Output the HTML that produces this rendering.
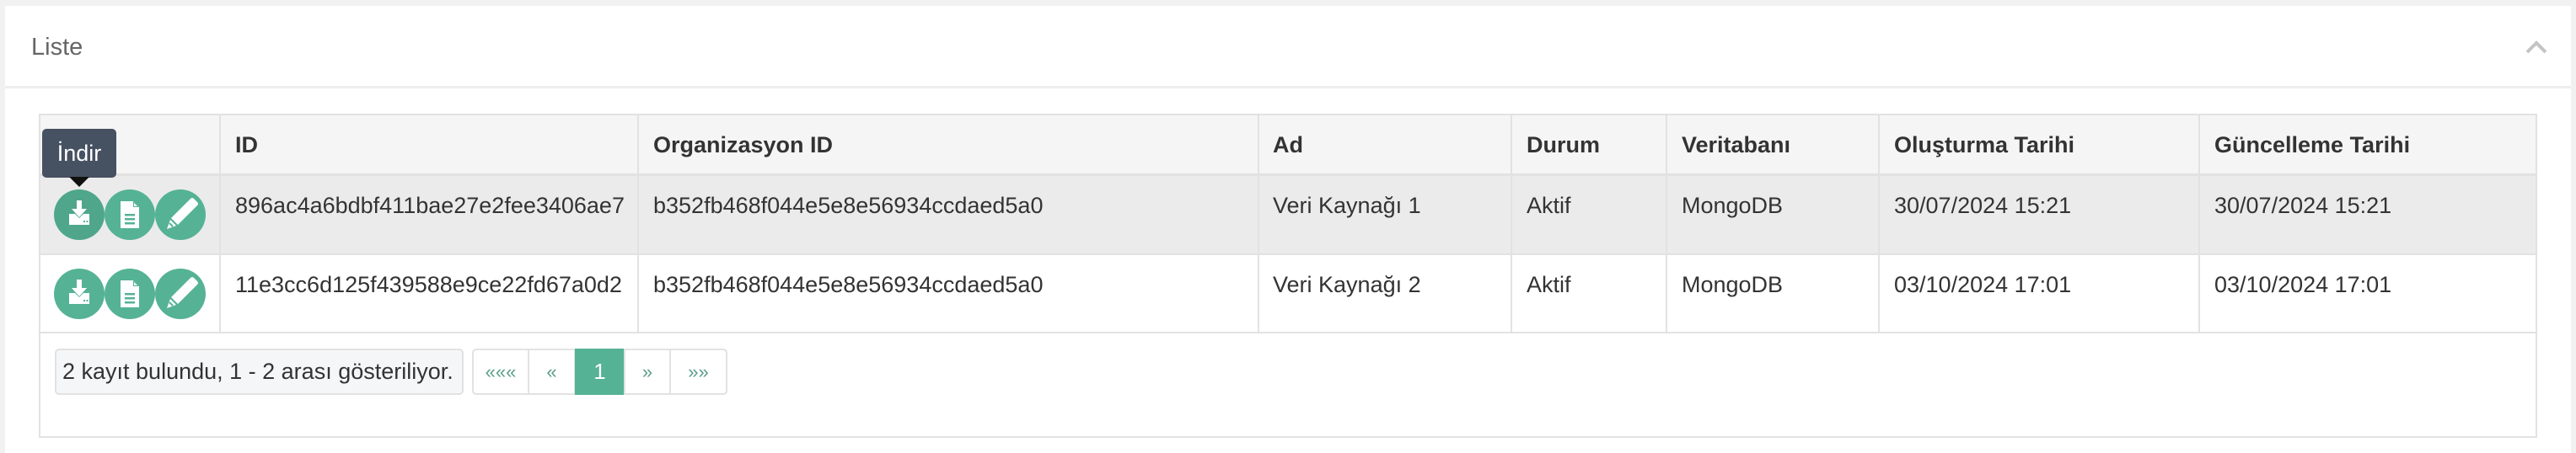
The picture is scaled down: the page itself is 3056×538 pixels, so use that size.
<!DOCTYPE html>
<html><head><meta charset="utf-8"><style>
*{margin:0;padding:0;box-sizing:border-box}
body{width:3056px;height:538px;background:#f1f1f1;font-family:"Liberation Sans",sans-serif;position:relative;overflow:hidden;color:#333}
.a{position:absolute}
.panel{left:6px;top:7px;width:3044px;height:531px;background:#fff}
.hline{left:6px;top:102px;width:3044px;height:3px;background:#eeeeee}
.t{font-size:27px;white-space:nowrap;line-height:30px}
.b{font-weight:bold}
.v{background:#e2e2e2}
.btn{width:60px;height:60px;border-radius:50%;background:#55b295}
.pg{top:414px;height:55px;border:2px solid #e2e2e2;background:#fff;display:flex;align-items:center;justify-content:center;color:#5b9e8a;font-size:22px}
</style></head><body>
<div class="a panel"></div>
<div class="a hline"></div>
<div class="a t" style="left:37px;top:41px;font-size:29px;color:#666">Liste</div>
<svg class="a" style="left:2994px;top:46px" width="30" height="20"><path d="M4 16 L15 5 L26 16" fill="none" stroke="#c4c4c4" stroke-width="4"/></svg>

<div class="a" style="left:46px;top:135px;width:2964px;height:385px;border:2px solid #e2e2e2;background:#fff"></div>
<div class="a" style="left:48px;top:137px;width:2960px;height:70px;background:#f5f5f5"></div>
<div class="a v" style="left:48px;top:206px;width:2960px;height:3px"></div>
<div class="a" style="left:48px;top:209px;width:2960px;height:92px;background:#ebebeb"></div>
<div class="a v" style="left:48px;top:301px;width:2960px;height:2px"></div>
<div class="a v" style="left:48px;top:394px;width:2960px;height:2px"></div>
<div class="a v" style="left:260px;top:137px;width:2px;height:257px"></div>
<div class="a v" style="left:756px;top:137px;width:2px;height:257px"></div>
<div class="a v" style="left:1492px;top:137px;width:2px;height:257px"></div>
<div class="a v" style="left:1792px;top:137px;width:2px;height:257px"></div>
<div class="a v" style="left:1976px;top:137px;width:2px;height:257px"></div>
<div class="a v" style="left:2228px;top:137px;width:2px;height:257px"></div>
<div class="a v" style="left:2608px;top:137px;width:2px;height:257px"></div>

<div class="a t b" style="left:279px;top:157px">ID</div>
<div class="a t b" style="left:775px;top:157px">Organizasyon ID</div>
<div class="a t b" style="left:1510px;top:157px">Ad</div>
<div class="a t b" style="left:1811px;top:157px">Durum</div>
<div class="a t b" style="left:1995px;top:157px">Veritabanı</div>
<div class="a t b" style="left:2247px;top:157px">Oluşturma Tarihi</div>
<div class="a t b" style="left:2627px;top:157px">Güncelleme Tarihi</div>

<div class="a t" style="left:279px;top:229px">896ac4a6bdbf411bae27e2fee3406ae7</div>
<div class="a t" style="left:775px;top:229px">b352fb468f044e5e8e56934ccdaed5a0</div>
<div class="a t" style="left:1510px;top:229px">Veri Kaynağı 1</div>
<div class="a t" style="left:1811px;top:229px">Aktif</div>
<div class="a t" style="left:1995px;top:229px">MongoDB</div>
<div class="a t" style="left:2247px;top:229px">30/07/2024 15:21</div>
<div class="a t" style="left:2627px;top:229px">30/07/2024 15:21</div>

<div class="a t" style="left:279px;top:323px">11e3cc6d125f439588e9ce22fd67a0d2</div>
<div class="a t" style="left:775px;top:323px">b352fb468f044e5e8e56934ccdaed5a0</div>
<div class="a t" style="left:1510px;top:323px">Veri Kaynağı 2</div>
<div class="a t" style="left:1811px;top:323px">Aktif</div>
<div class="a t" style="left:1995px;top:323px">MongoDB</div>
<div class="a t" style="left:2247px;top:323px">03/10/2024 17:01</div>
<div class="a t" style="left:2627px;top:323px">03/10/2024 17:01</div>

<div class="a btn" style="left:64px;top:225px;background:#4fa68b"></div>
<div class="a btn" style="left:124px;top:225px"></div>
<div class="a btn" style="left:184px;top:225px"></div>
<div class="a btn" style="left:64px;top:319px"></div>
<div class="a btn" style="left:124px;top:319px"></div>
<div class="a btn" style="left:184px;top:319px"></div>
<svg class="a" style="left:0;top:0" width="260" height="400">
<defs>
<g id="dl" fill="#fff"><rect x="-3" y="-16" width="6" height="12"/><path d="M-9 -6 L9 -6 L0 4 Z"/><path d="M-12 0 L-5 0 L0 5 L5 0 L12 0 L12 13 L-12 13 Z"/><rect x="5" y="8" width="2" height="2" fill="#55b295"/><rect x="8.5" y="8" width="2" height="2" fill="#55b295"/></g>
<g id="doc"><path d="M-11 -16 L4 -16 L11 -9 L11 16 L-11 16 Z" fill="#fff"/><path d="M4 -16 L4 -9 L11 -9" fill="#55b295"/><path d="M5 -14 L5 -10 L9 -10 Z" fill="#fff"/><rect x="-6" y="-1" width="12" height="2.5" fill="#55b295"/><rect x="-6" y="4" width="12" height="2.5" fill="#55b295"/><rect x="-6" y="9" width="12" height="2.5" fill="#55b295"/></g>
<g id="pen" fill="#fff"><path d="M9 -17 L17 -9 L-3 11 L-11 3 Z"/><path d="M-12 5 L-5 12 L-16 16 Z"/><path d="M9 -17 L12 -20 Q14 -22 16 -20 L20 -16 Q22 -14 20 -12 L17 -9 Z"/><path d="M-13 9 L-9 13" stroke="#55b295" stroke-width="2"/></g>
</defs>
<use href="#dl" x="94" y="254"/><use href="#doc" x="154" y="255"/><use href="#pen" x="214" y="256"/>
<use href="#dl" x="94" y="348"/><use href="#doc" x="154" y="349"/><use href="#pen" x="214" y="350"/>
</svg>

<div class="a" style="left:50px;top:153px;width:88px;height:58px;background:#465161;border-radius:5px;color:#fff;font-size:27px;line-height:58px;text-align:center">İndir</div>
<svg class="a" style="left:82px;top:210px" width="24" height="13"><path d="M0 0 L24 0 L12 12 Z" fill="#111"/></svg>

<div class="a" style="left:65px;top:414px;width:485px;height:55px;border:2px solid #e2e2e2;border-radius:5px;background:#f5f6f8;font-size:27px;line-height:51px;padding-left:7px;white-space:nowrap">2 kayıt bulundu, 1 - 2 arası gösteriliyor.</div>
<div class="a pg" style="left:560px;width:68px;border-radius:5px 0 0 5px">«««</div>
<div class="a pg" style="left:626px;width:57px">«</div>
<div class="a pg" style="left:682px;width:59px;background:#55b295;border-color:#55b295;color:#fff;font-size:26px">1</div>
<div class="a pg" style="left:740px;width:56px">»</div>
<div class="a pg" style="left:794px;width:69px;border-radius:0 5px 5px 0">»»</div>
</body></html>
